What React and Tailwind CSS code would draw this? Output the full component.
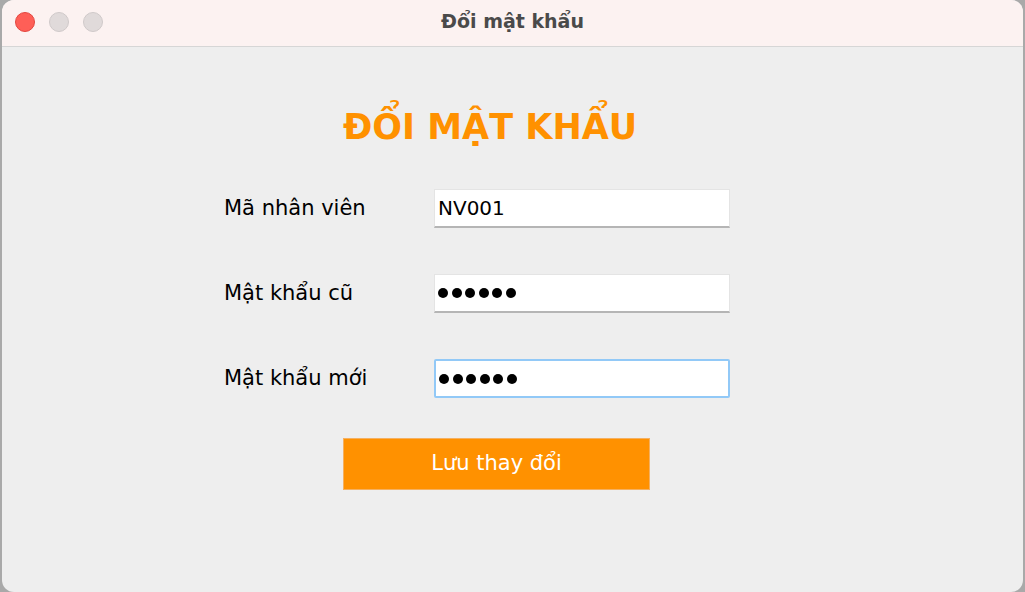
import React from 'react';

const FONT = { fontFamily: '"DejaVu Sans", "Liberation Sans", sans-serif' };

function Dots() {
  return (
    <div className="flex items-center gap-[3.5px]">
      {[0, 1, 2, 3, 4, 5].map(i => (
        <span key={i} className="block w-[10px] h-[10px] rounded-full bg-black" />
      ))}
    </div>
  );
}

function Row({ label, children, focused }) {
  return (
    <div className="flex items-center h-[39px]">
      <div className="w-[210px] text-[21px] text-black">{label}</div>
      <div
        className={`w-[296px] h-[39px] bg-white flex items-center pl-[3px] ${
          focused
            ? 'border-2 border-[#92c9f7] rounded-[2px] pl-[2px]'
            : 'border border-[#e4e4e4] border-b-[#b5b5b5] border-b-2'
        }`}
      >
        {children}
      </div>
    </div>
  );
}

export default function App() {
  return (
    <div className="w-[1025px] h-[592px] bg-[#5a3a1a] overflow-hidden" style={FONT}>
      <div className="w-full h-full bg-[#a9a9a9] pl-[2px] pr-[2px]">
        <div className="w-full h-full bg-[#eeeeee] rounded-[12px] overflow-hidden flex flex-col">
          {/* title bar */}
          <div className="h-[47px] shrink-0 bg-[#fcf2f1] border-b border-[#d6d6d6] relative flex items-center justify-center">
            <div className="absolute left-[13px] top-[12px] flex gap-[14px]">
              <span className="block w-[20px] h-[20px] rounded-full bg-[#fe5f57] border border-[#e2463f]" />
              <span className="block w-[20px] h-[20px] rounded-full bg-[#e0dada] border border-[#cfc9c9]" />
              <span className="block w-[20px] h-[20px] rounded-full bg-[#e0dada] border border-[#cfc9c9]" />
            </div>
            <span className="text-[19px] font-bold text-[#4a4a4a] mt-[-4px]">Đổi mật khẩu</span>
          </div>

          {/* content */}
          <div className="pt-[60px] pl-[222px]">
            <div className="pl-[119px] h-[40px] leading-[40px] text-[35px] font-bold text-[#ff9100]">
              ĐỔI MẬT KHẨU
            </div>
            <div className="mt-[42px] flex flex-col gap-[46px]">
              <Row label="Mã nhân viên">
                <span className="text-[20px] text-black">NV001</span>
              </Row>
              <Row label="Mật khẩu cũ">
                <Dots />
              </Row>
              <Row label="Mật khẩu mới" focused>
                <Dots />
              </Row>
            </div>
            <div className="mt-[40px] ml-[119px] w-[307px] h-[52px] bg-[#ff9100] border border-[#f5b060] flex items-center justify-center text-[21px] text-white">
              Lưu thay đổi
            </div>
          </div>
        </div>
      </div>
    </div>
  );
}
